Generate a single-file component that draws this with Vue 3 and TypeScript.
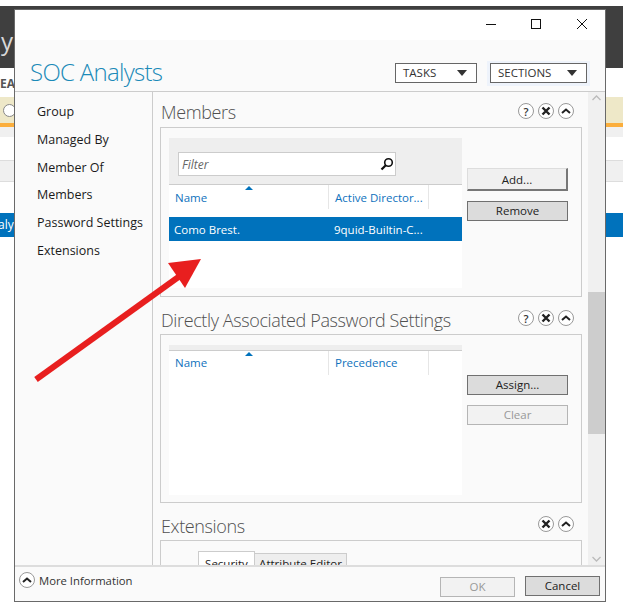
<script setup lang="ts">
type Column = { label: string; width: number };

const navItems = ["Group", "Managed By", "Member Of", "Members", "Password Settings", "Extensions"];

const memberColumns: Column[] = [
  { label: "Name", width: 160 },
  { label: "Active Director...", width: 100 },
  { label: "", width: 33 },
];
const passwordColumns: Column[] = [
  { label: "Name", width: 160 },
  { label: "Precedence", width: 100 },
  { label: "", width: 33 },
];
</script>

<template>
  <div class="page">
    <div class="backdrop">
      <div class="bg-dark"><span class="bg-y">y</span></div>
      <div class="bg-crumb"><b>EA</b></div>
      <div class="bg-alert"><i class="bg-radio"></i></div>
      <div class="bg-strip"></div>
      <div class="bg-row1"></div>
      <div class="bg-row2"></div>
      <div class="bg-sel">aly</div>
    </div>

    <div class="dialog">
      <div class="titlebar">
        <svg class="winctl" width="102" height="30" viewBox="0 0 102 30">
          <path d="M0 14.5h10" stroke="#111" fill="none" />
          <rect x="45.5" y="9.5" width="9" height="9" stroke="#111" fill="none" />
          <path d="M91 9l10 10M101 9l-10 10" stroke="#111" fill="none" />
        </svg>
      </div>

      <header class="head">
        <h1>SOC Analysts</h1>
        <div class="head-actions">
          <div class="menu-btn tasks">TASKS<i class="caret"></i></div>
          <div class="sections-wrap">
            <div class="menu-btn sections">SECTIONS<i class="caret"></i></div>
          </div>
        </div>
      </header>

      <div class="body">
        <nav class="nav">
          <a v-for="item in navItems" :key="item">{{ item }}</a>
        </nav>

        <main class="main">
          <section class="section">
            <div class="sec-head">
              <h2>Members</h2>
              <div class="sec-icons">
                <span class="round q">?</span>
                <span class="round"><svg width="10" height="10" viewBox="0 0 10 10"><path d="M1.5 1.5l7 7M8.5 1.5l-7 7" stroke="#222" stroke-width="2.4" fill="none" /></svg></span>
                <span class="round"><svg width="10" height="10" viewBox="0 0 10 10"><path d="M1 7l4-3.5L9 7" stroke="#222" stroke-width="2" fill="none" /></svg></span>
              </div>
            </div>
            <div class="box box-members">
              <div class="grid">
                <div class="band">
                  <div class="filter">
                    <span>Filter</span>
                    <svg width="14" height="14" viewBox="0 0 14 14"><circle cx="8.5" cy="5.5" r="3.8" stroke="#111" stroke-width="1.6" fill="none" /><path d="M5.8 8.2L1.5 12.5" stroke="#111" stroke-width="2.2" /></svg>
                  </div>
                </div>
                <div class="cols">
                  <div v-for="c in memberColumns" :key="c.label" class="col" :style="{ width: c.width + 'px' }">{{ c.label }}</div>
                  <i class="sort"></i>
                </div>
                <div class="row-sel">
                  <span class="cell-a">Como Brest.</span>
                  <span>9quid-Builtin-C...</span>
                </div>
              </div>
              <div class="actions">
                <div class="btn raised">Add...</div>
                <div class="btn dark">Remove</div>
              </div>
            </div>
          </section>

          <section class="section">
            <div class="sec-head">
              <h2>Directly Associated Password Settings</h2>
              <div class="sec-icons">
                <span class="round q">?</span>
                <span class="round"><svg width="10" height="10" viewBox="0 0 10 10"><path d="M1.5 1.5l7 7M8.5 1.5l-7 7" stroke="#222" stroke-width="2.4" fill="none" /></svg></span>
                <span class="round"><svg width="10" height="10" viewBox="0 0 10 10"><path d="M1 7l4-3.5L9 7" stroke="#222" stroke-width="2" fill="none" /></svg></span>
              </div>
            </div>
            <div class="box box-password">
              <div class="grid">
                <div class="band thin"></div>
                <div class="cols">
                  <div v-for="c in passwordColumns" :key="c.label" class="col" :style="{ width: c.width + 'px' }">{{ c.label }}</div>
                  <i class="sort"></i>
                </div>
              </div>
              <div class="actions">
                <div class="btn dark">Assign...</div>
                <div class="btn disabled">Clear</div>
              </div>
            </div>
          </section>

          <section class="section">
            <div class="sec-head">
              <h2>Extensions</h2>
              <div class="sec-icons">
                <span class="round"><svg width="10" height="10" viewBox="0 0 10 10"><path d="M1.5 1.5l7 7M8.5 1.5l-7 7" stroke="#222" stroke-width="2.4" fill="none" /></svg></span>
                <span class="round"><svg width="10" height="10" viewBox="0 0 10 10"><path d="M1 7l4-3.5L9 7" stroke="#222" stroke-width="2" fill="none" /></svg></span>
              </div>
            </div>
            <div class="box box-ext">
              <div class="tabs">
                <div class="tab on">Security</div>
                <div class="tab off">Attribute Editor</div>
              </div>
            </div>
          </section>
        </main>

        <div class="scrollbar">
          <svg width="17" height="12" viewBox="0 0 17 12"><path d="M4.5 8L8.5 4l4 4" stroke="#bbb" stroke-width="1.3" fill="none" /></svg>
          <div class="track"><div class="thumb"></div></div>
          <svg width="17" height="12" viewBox="0 0 17 12"><path d="M4.5 4l4 4 4-4" stroke="#bbb" stroke-width="1.3" fill="none" /></svg>
        </div>
      </div>

      <footer class="foot">
        <div class="more">
          <span class="round small"><svg width="10" height="10" viewBox="0 0 10 10"><path d="M1 7l4-3.5L9 7" stroke="#222" stroke-width="2" fill="none" /></svg></span>
          More Information
        </div>
        <div class="foot-btns">
          <div class="btn disabled foot-btn">OK</div>
          <div class="btn dark foot-btn cancel">Cancel</div>
        </div>
      </footer>
    </div>

    <svg class="arrow" width="623" height="606" viewBox="0 0 623 606">
      <path d="M36 379.5L184 273" stroke="#e81f1f" stroke-width="6" fill="none" />
      <path d="M201 259L168 263L185 288Z" fill="#e81f1f" />
    </svg>
  </div>
</template>

<style scoped>
.page {
  position: relative;
  width: 623px;
  height: 606px;
  overflow: hidden;
  background: #fff;
  font-family: "Open Sans", "Noto Sans", sans-serif;
  color: #222;
}

.backdrop {
  padding-top: 6px;
}

.bg-dark {
  height: 62px;
  background: #3f3f3f;
  color: #d8d8d8;
  font-size: 24px;
  line-height: 70px;
}

.bg-y {
  margin-left: 1px;
}

.bg-crumb {
  height: 29px;
  font-size: 12px;
  line-height: 32px;
  color: #555;
}

.bg-alert {
  height: 30px;
  box-sizing: border-box;
  background: #eee8c8;
  border-bottom: 4px solid #fbae3c;
  position: relative;
}

.bg-radio {
  position: absolute;
  left: 3px;
  top: 7px;
  width: 11px;
  height: 11px;
  border: 1px solid #888;
  border-radius: 50%;
  background: #fff;
}

.bg-strip {
  height: 10px;
  background: #f0f0f0;
}

.bg-row1 {
  height: 23px;
  background: #fff;
  border-bottom: 1px solid #ddd;
}

.bg-row2 {
  height: 20px;
  background: #f0f0f0;
  border-bottom: 1px solid #ddd;
}

.bg-sel {
  margin-top: 31px;
  height: 24px;
  background: #0072bc;
  color: #fff;
  font-size: 12px;
  line-height: 24px;
  text-indent: -2px;
}

.dialog {
  position: absolute;
  left: 14px;
  top: 9px;
  width: 592px;
  height: 593px;
  box-sizing: border-box;
  border: 1px solid #696969;
  background: #fafafa;
  display: flex;
  flex-direction: column;
}

.titlebar {
  height: 30px;
  flex: none;
  background: #fff;
  display: flex;
  justify-content: flex-end;
  padding-right: 17px;
}

.head {
  height: 52px;
  flex: none;
  box-sizing: border-box;
  display: flex;
  justify-content: space-between;
  border-bottom: 1px solid #ccc;
  padding: 0 15px;
}

.head h1 {
  margin: 17px 0 0;
  font-size: 24px;
  line-height: 30px;
  font-weight: 300;
  letter-spacing: -0.7px;
  color: #1b8ab8;
}

.head-actions {
  display: flex;
  align-items: flex-start;
  margin-top: 23px;
}

.menu-btn {
  box-sizing: border-box;
  height: 20px;
  border: 1px solid #666;
  background: #fff;
  font-size: 11.5px;
  line-height: 18px;
  padding: 0 9px 0 7px;
  color: #333;
  display: flex;
  align-items: center;
  justify-content: space-between;
}

.tasks {
  width: 82px;
  margin-right: 10px;
}

.sections-wrap {
  padding: 2px 3px 3px;
  margin-top: -2px;
  background: #eef3fb;
}

.sections {
  width: 97px;
}

.caret {
  width: 0;
  height: 0;
  border-left: 5px solid transparent;
  border-right: 5px solid transparent;
  border-top: 6px solid #333;
}

.body {
  flex: 1;
  min-height: 0;
  display: flex;
}

.nav {
  width: 138px;
  flex: none;
  box-sizing: border-box;
  border-right: 1px solid #ccc;
  padding-top: 6px;
  display: flex;
  flex-direction: column;
}

.nav a {
  height: 27.8px;
  line-height: 27.8px;
  padding-left: 22px;
  font-size: 12.5px;
  color: #1a1a1a;
}

.main {
  width: 435px;
  flex: none;
  overflow: hidden;
  box-sizing: border-box;
  padding-left: 7px;
}

.section {
  width: 422px;
}

.sec-head {
  height: 35px;
  box-sizing: border-box;
  padding: 5px 8px 0 1px;
  display: flex;
  justify-content: space-between;
  align-items: center;
}

.section + .section .sec-head {
  margin-top: 2px;
}

.section + .section h2 {
  margin-top: 2px;
}

.sec-head h2 {
  margin: 0;
  font-size: 18px;
  font-weight: 300;
  letter-spacing: -0.38px;
  color: #505050;
}

.sec-icons {
  display: flex;
  gap: 4px;
  margin-top: -2px;
}

.round {
  width: 14px;
  height: 14px;
  border: 1px solid #999;
  border-radius: 50%;
  background: #fff;
  display: flex;
  align-items: center;
  justify-content: center;
  font-size: 11px;
  font-weight: 600;
}

.round.q {
  color: #333;
}

.box {
  box-sizing: border-box;
  border: 1px solid #ccc;
  display: flex;
  padding: 10px 0 0 8px;
}

.box-members {
  height: 170px;
}

.box-password {
  height: 169px;
}

.box-ext {
  height: 60px;
}

.grid {
  width: 293px;
  height: 150px;
  background: #fff;
  flex: none;
  position: relative;
}

.band {
  height: 47px;
  box-sizing: border-box;
  background: #eee;
  border-bottom: 1px solid #ccc;
  padding: 14px 0 0 9px;
}

.band.thin {
  height: 6px;
  padding: 0;
}

.filter {
  box-sizing: border-box;
  width: 218px;
  height: 24px;
  background: #fff;
  border: 1px solid #ccc;
  display: flex;
  align-items: center;
  justify-content: space-between;
  padding: 0 0 0 3px;
  font-size: 12px;
  font-style: italic;
  color: #666;
}

.filter svg {
  margin-right: 1px;
}

.cols {
  display: flex;
  position: relative;
  height: 32px;
}

.band.thin + .cols .col {
  line-height: 24px;
}

.col {
  box-sizing: border-box;
  font-size: 11.5px;
  line-height: 26px;
  padding-left: 6px;
  color: #0f72bd;
  border-right: 1px solid #e6e6e6;
  height: 24px;
}

.col:last-of-type {
  border-right: 0;
}

.sort {
  position: absolute;
  left: 76px;
  top: 1px;
  width: 0;
  height: 0;
  border-left: 4px solid transparent;
  border-right: 4px solid transparent;
  border-bottom: 4px solid #0072bc;
}

.row-sel {
  height: 24px;
  background: #0072bc;
  color: #fff;
  font-size: 11.5px;
  line-height: 26px;
  display: flex;
}

.cell-a {
  width: 165px;
  padding-left: 5px;
  box-sizing: border-box;
}

.actions {
  margin-left: 5px;
  width: 101px;
  padding-top: 30px;
  display: flex;
  flex-direction: column;
  gap: 10px;
}

.btn {
  box-sizing: border-box;
  height: 20px;
  border: 1px solid #aaa;
  font-size: 11.5px;
  line-height: 18px;
  text-align: center;
  color: #222;
}

.raised {
  height: 23px;
  line-height: 22px;
  background: #f0f0f0;
  border: 1px solid #ddd;
  border-right: 2px solid #777;
  border-bottom: 2px solid #777;
}

.dark {
  background: #dcdcdc;
  border-color: #707070;
}

.disabled {
  background: #f2f2f2;
  border-color: #b5b5b5;
  color: #999;
}

.tabs {
  display: flex;
  margin-left: 29px;
  align-items: flex-start;
}

.tab {
  box-sizing: border-box;
  height: 30px;
  border: 1px solid #ccc;
  background: #eee;
  font-size: 11.5px;
  line-height: 20px;
  text-align: center;
}

.tab.on {
  width: 57px;
  background: #fff;
  padding-top: 2px;
}

.tab.off {
  width: 92px;
  margin-top: 2px;
  border-left: 0;
}

.scrollbar {
  width: 17px;
  flex: none;
  background: #f0f0f0;
  display: flex;
  flex-direction: column;
}

.track {
  flex: 1;
  padding-top: 188px;
}

.thumb {
  height: 142px;
  background: #cdcdcd;
}

.foot {
  height: 36px;
  flex: none;
  box-sizing: border-box;
  background: #fafafa;
  border-top: 2px solid #ddd;
  display: flex;
  justify-content: space-between;
  align-items: flex-start;
  padding: 9px 5px 0 4px;
}

.more {
  display: flex;
  align-items: center;
  gap: 4px;
  font-size: 11.3px;
  color: #333;
  margin-top: -4px;
}

.foot-btns {
  display: flex;
  gap: 10px;
}

.foot-btn {
  width: 75px;
  margin-top: 1px;
}

.cancel {
  margin-top: 0;
}

.arrow {
  position: absolute;
  left: 0;
  top: 0;
  pointer-events: none;
}
</style>
